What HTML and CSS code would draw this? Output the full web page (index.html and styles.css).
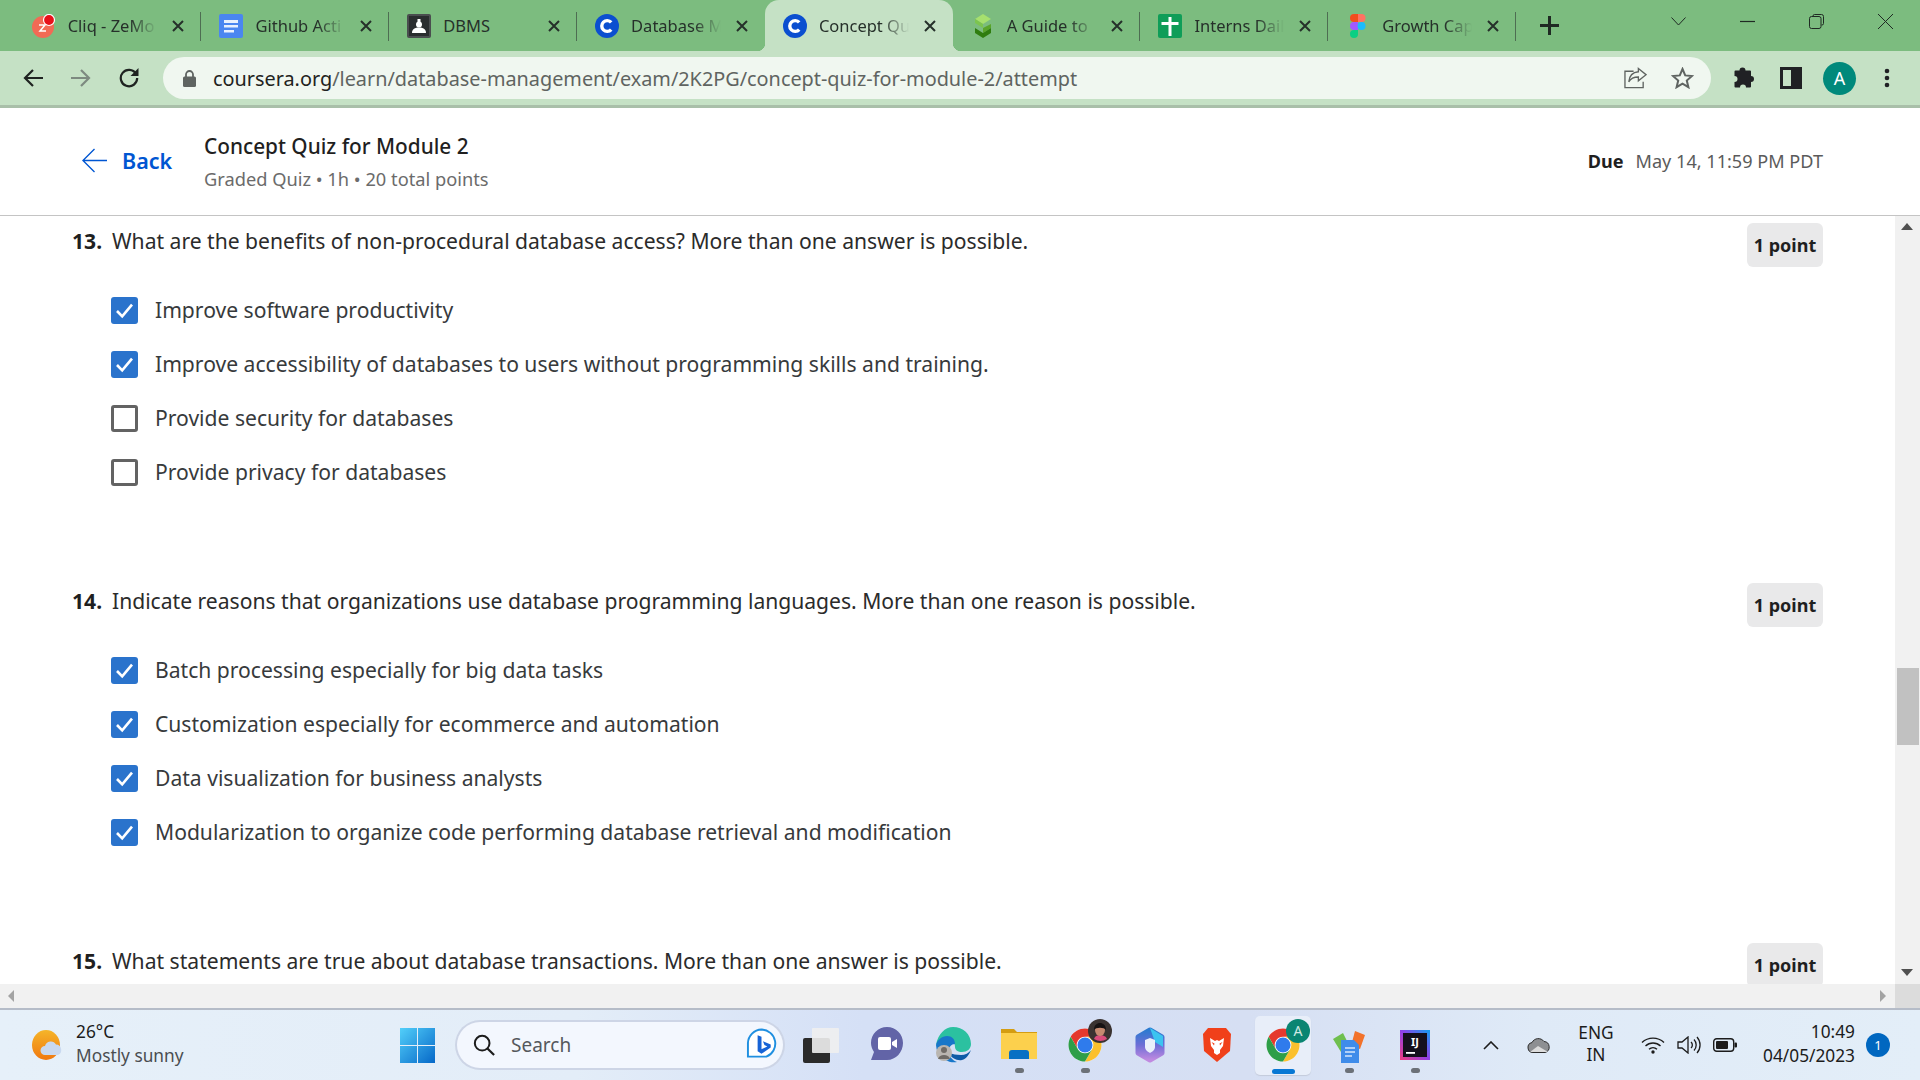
FILE: index.html
```html
<!DOCTYPE html>
<html lang="en">
<head>
  <meta charset="UTF-8" />
  <meta name="viewport" content="width=device-width, initial-scale=1.0" />
  <title>Concept Quiz for Module 2</title>
  <link rel="stylesheet" href="styles.css">
</head>
<body>

  <svg class="defs" width="0" height="0">
    <symbol id="coursera" viewBox="0 0 24 24">
      <circle cx="12" cy="12" r="12" fill="#0b4fd0"/>
      <path d="M16.2 8.4a5.4 5.4 0 1 0 0 7.2" fill="none" stroke="#fff" stroke-width="3.4"/>
    </symbol>
    <symbol id="chrome" viewBox="0 0 48 48">
      <circle cx="24" cy="24" r="22" fill="#fff"/>
      <path d="M24 13H43.05A22 22 0 0 0 4.95 13L14.47 29.5A11 11 0 0 1 24 13Z" fill="#e5392d"/>
      <path d="M43.05 13A22 22 0 0 1 24 46L33.53 29.5A11 11 0 0 0 24 13Z" fill="#fbc02d"/>
      <path d="M24 46A22 22 0 0 1 4.95 13L14.47 29.5A11 11 0 0 0 33.53 29.5Z" fill="#2e9e48"/>
      <circle cx="24" cy="24" r="10" fill="#2f7bec"/>
    </symbol>
    <symbol id="tick" viewBox="0 0 27 27">
      <rect x="0" y="0" width="27" height="27" rx="3" fill="#2a73cc"/>
      <path d="M6 14l5.2 5.4L21 7.6" fill="none" stroke="#fff" stroke-width="2.6"/>
    </symbol>
    <symbol id="close" viewBox="0 0 14 14">
      <path d="M2 2l10 10M12 2L2 12" fill="none" stroke="#25302a" stroke-width="2"/>
    </symbol>
  </svg>

  <div class="tabstrip">
    <div class="tab">
      <svg class="favicon" viewBox="0 0 24 24"><ellipse cx="11" cy="13" rx="11" ry="11" fill="#f26a55"/><circle cx="17" cy="6" r="5.5" fill="#e8101a" stroke="#fff" stroke-width="1.2"/><path d="M7 11h6l-5 6h6" fill="none" stroke="#fff" stroke-width="1.5"/></svg>
      <span class="tab-title">Cliq - ZeMo</span>
      <svg class="tab-close"><use href="#close"/></svg>
    </div>
    <div class="tab">
      <svg class="favicon" viewBox="0 0 24 24"><path d="M2 0h20a2 2 0 0 1 2 2v20a2 2 0 0 1-2 2H2a2 2 0 0 1-2-2V2a2 2 0 0 1 2-2z" fill="#4a86f0"/><path d="M5 6h14v3H5zM5 11h14v2.6H5zM5 16h10v2.6H5z" fill="#e8f0fe"/></svg>
      <span class="tab-title">Github Acti</span>
      <svg class="tab-close"><use href="#close"/></svg>
    </div>
    <div class="tab">
      <svg class="favicon" viewBox="0 0 24 24"><rect width="24" height="24" rx="2" fill="#4a4d4f"/><rect x="2" y="2" width="20" height="20" fill="#2a2d2f"/><rect x="10.500" y="5" width="3" height="3" fill="#fff"/><circle cx="12" cy="10.500" r="3" fill="#fff"/><path d="M5 19c0-4 3-5.500 7-5.500s7 1.500 7 5.500z" fill="#fff"/></svg>
      <span class="tab-title plain">DBMS</span>
      <svg class="tab-close"><use href="#close"/></svg>
    </div>
    <div class="tab no-sep">
      <svg class="favicon"><use href="#coursera"/></svg>
      <span class="tab-title">Database M</span>
      <svg class="tab-close"><use href="#close"/></svg>
    </div>
    <div class="tab active">
      <svg class="favicon"><use href="#coursera"/></svg>
      <span class="tab-title">Concept Qu</span>
      <svg class="tab-close"><use href="#close"/></svg>
    </div>
    <div class="tab">
      <svg class="favicon" viewBox="0 0 24 24"><path d="M12 0l8 5-8 5-8-5z" fill="#a6e06e"/><path d="M4 5l8 5v4l-8-5z" fill="#7cc44f"/><path d="M12 14l8-4v4l-8 5z" fill="#5aa52a"/><path d="M4 14l8 5 8-5v5l-8 5-8-5z" fill="#2f7d0f"/></svg>
      <span class="tab-title">A Guide to</span>
      <svg class="tab-close"><use href="#close"/></svg>
    </div>
    <div class="tab">
      <svg class="favicon" viewBox="0 0 24 24"><rect width="24" height="24" rx="2" fill="#0f9d58"/><path d="M10.500 3h3v5h7v3h-7v11h-3V11h-7V8h7z" fill="#fff"/></svg>
      <span class="tab-title">Interns Dail</span>
      <svg class="tab-close"><use href="#close"/></svg>
    </div>
    <div class="tab">
      <svg class="favicon" viewBox="0 0 24 24"><path d="M8 0h4v8H8a4 4 0 0 1 0-8z" fill="#f24e1e"/><path d="M12 0h3.500a4 4 0 0 1 0 8H12z" fill="#ff7262"/><path d="M8 8h4v8H8a4 4 0 0 1 0-8z" fill="#a259ff"/><circle cx="15.500" cy="12" r="4" fill="#1abcfe"/><path d="M8 16h4v4a4 4 0 1 1-4-4z" fill="#0acf83"/></svg>
      <span class="tab-title">Growth Cap</span>
      <svg class="tab-close"><use href="#close"/></svg>
    </div>
    <svg class="newtab" viewBox="0 0 19 19"><path d="M9.500 0v19M0 9.500h19" fill="none" stroke="#1f2a23" stroke-width="3"/></svg>
    <div class="window-controls">
      <svg class="win-btn chevron" viewBox="0 0 15 15"><path d="M.5 3.500l7 7.500 7-7.500" fill="none" stroke="#1f2a23" stroke-width="1"/></svg>
      <svg class="win-btn" viewBox="0 0 15 15"><path d="M0 7.500h15" fill="none" stroke="#1f2a23" stroke-width="1.200"/></svg>
      <svg class="win-btn" viewBox="0 0 15 15"><path d="M4 2.500v-.5a1.500 1.500 0 0 1 1.500-1.500h7a2 2 0 0 1 2 2v7a1.500 1.500 0 0 1-1.500 1.500h-.5" fill="none" stroke="#1f2a23"/><rect x=".5" y="2.500" width="11.500" height="12" rx="2" fill="none" stroke="#1f2a23"/></svg>
      <svg class="win-btn" viewBox="0 0 15 15"><path d="M0 0l15 15M15 0L0 15" fill="none" stroke="#1f2a23" stroke-width="1"/></svg>
    </div>
  </div>

  <div class="toolbar">
    <svg class="nav-icon first" viewBox="0 0 20 20"><path d="M20 10H2M10 2l-8 8 8 8" fill="none" stroke="#1f2321" stroke-width="2.200"/></svg>
    <svg class="nav-icon" viewBox="0 0 20 20"><path d="M0 10h18M10 2l8 8-8 8" fill="none" stroke="#7d8a80" stroke-width="2.200"/></svg>
    <svg class="nav-icon" viewBox="0 0 20 20"><path d="M17 5.800A8.200 8.200 0 1 0 18.200 10" fill="none" stroke="#1f2321" stroke-width="2.200"/><path d="M19.500 0v8h-8z" fill="#1f2321"/></svg>
    <div class="omnibox">
      <svg class="lock" viewBox="0 0 13 17"><path d="M3 7V4.500a3.500 3.500 0 0 1 7 0V7" fill="none" stroke="#5f6461" stroke-width="1.800"/><rect y="6.500" width="13" height="10.500" rx="1.500" fill="#5f6461"/></svg>
      <span class="url"><span class="url-host">coursera.org</span>/learn/database-management/exam/2K2PG/concept-quiz-for-module-2/attempt</span>
      <svg class="omni-icon share" viewBox="0 0 24 22"><path d="M10 4H1v17h19v-6" fill="none" stroke="#5f6461" stroke-width="1.400"/><path d="M15 1l8 6.500-8 6.500v-4c-5 0-8 1.500-10 5 .5-6 4-10 10-10.500z" fill="none" stroke="#5f6461" stroke-width="1.400"/></svg>
      <svg class="omni-icon star" viewBox="0 0 22 22"><path d="M11 2l2.700 6.400 6.800.6-5.200 4.500 1.600 6.700L11 16.600l-5.900 3.600 1.600-6.700L1.500 9l6.800-.6z" fill="none" stroke="#5f6461" stroke-width="2"/></svg>
    </div>
    <svg class="tool-icon puzzle" viewBox="0 0 22 22"><path d="M7.500 3.500a3 3 0 0 1 6 0H18a1 1 0 0 1 1 1V9a3 3 0 0 1 0 6v4.500a1 1 0 0 1-1 1h-4a3 3 0 0 0-6 0H3.500a1 1 0 0 1-1-1V15a3 3 0 0 0 0-6V4.500a1 1 0 0 1 1-1z" fill="#202124"/></svg>
    <svg class="tool-icon panel" viewBox="0 0 22 22"><path d="M0 0h22v22H0zM3 3v16h8V3z" fill="#202124" fill-rule="evenodd"/></svg>
    <span class="avatar">A</span>
    <svg class="tool-icon dots" viewBox="0 0 6 20"><circle cx="3" cy="3" r="2.300" fill="#202124"/><circle cx="3" cy="10" r="2.300" fill="#202124"/><circle cx="3" cy="17" r="2.300" fill="#202124"/></svg>
  </div>

  <header class="quiz-head">
    <a class="back" href="#">
      <svg class="back-arrow" viewBox="0 0 26 26"><path d="M26 13H1M13 1L1 13l12 12" fill="none" stroke="#0056d2" stroke-width="1.400"/></svg>
      <span>Back</span>
    </a>
    <div class="quiz-title">
      <h1>Concept Quiz for Module 2</h1>
      <p>Graded Quiz • 1h • 20 total points</p>
    </div>
    <div class="due"><b>Due</b><span>May 14, 11:59 PM PDT</span></div>
  </header>

  <div class="viewport">
    <main class="quiz">
      <section class="question">
        <div class="q-head">
          <p class="q-text"><b>13.</b><span>What are the benefits of non-procedural database access? More than one answer is possible.</span></p>
          <span class="points">1 point</span>
        </div>
        <ul class="options">
          <li><svg class="check"><use href="#tick"/></svg>Improve software productivity</li>
          <li><svg class="check"><use href="#tick"/></svg>Improve accessibility of databases to users without programming skills and training.</li>
          <li><span class="check empty"></span>Provide security for databases</li>
          <li><span class="check empty"></span>Provide privacy for databases</li>
        </ul>
      </section>

      <section class="question">
        <div class="q-head">
          <p class="q-text"><b>14.</b><span>Indicate reasons that organizations use database programming languages. More than one reason is possible.</span></p>
          <span class="points">1 point</span>
        </div>
        <ul class="options">
          <li><svg class="check"><use href="#tick"/></svg>Batch processing especially for big data tasks</li>
          <li><svg class="check"><use href="#tick"/></svg>Customization especially for ecommerce and automation</li>
          <li><svg class="check"><use href="#tick"/></svg>Data visualization for business analysts</li>
          <li><svg class="check"><use href="#tick"/></svg>Modularization to organize code performing database retrieval and modification</li>
        </ul>
      </section>

      <section class="question">
        <div class="q-head">
          <p class="q-text"><b>15.</b><span>What statements are true about database transactions. More than one answer is possible.</span></p>
          <span class="points">1 point</span>
        </div>
      </section>
    </main>
    <div class="vscroll">
      <span class="arrow up"></span>
      <span class="vthumb"></span>
      <span class="arrow down"></span>
    </div>
  </div>

  <div class="hscroll">
    <span class="arrow left"></span>
    <span class="arrow right"></span>
    <span class="corner"></span>
  </div>

  <footer class="taskbar">
    <div class="weather">
      <svg class="weather-icon" viewBox="0 0 32 32"><defs><linearGradient id="sun" x1="0" y1="0" x2="0" y2="1"><stop offset="0" stop-color="#f5b52a"/><stop offset="1" stop-color="#f0780f"/></linearGradient></defs><ellipse cx="14" cy="16" rx="14" ry="15" fill="url(#sun)"/><path d="M13 26a4.500 4.500 0 0 1 0-9 6 6 0 0 1 11-1.500 5.500 5.500 0 0 1 2 10.500z" fill="#c9d9f0"/></svg>
      <div class="weather-text">
        <span class="temp">26°C</span>
        <span class="sky">Mostly sunny</span>
      </div>
    </div>

    <svg class="start" viewBox="0 0 35 35"><defs><linearGradient id="win" x1="0" y1="0" x2="1" y2="1"><stop offset="0" stop-color="#52cffa"/><stop offset="1" stop-color="#0668c8"/></linearGradient></defs><path d="M0 0h17v17H0zM18 0h17v17H18zM0 18h17v17H0zM18 18h17v17H18z" fill="url(#win)"/></svg>

    <div class="search">
      <svg class="search-icon" viewBox="0 0 24 24"><circle cx="10" cy="10" r="8" fill="none" stroke="#1c1c1c" stroke-width="2.200"/><path d="M15.500 15.500L23 23" stroke="#1c1c1c" stroke-width="2.400"/></svg>
      <span class="search-text">Search</span>
      <svg class="bing" viewBox="0 0 32 36"><path d="M16 2a14.500 14.500 0 0 1 5 28H2V16A14.500 14.500 0 0 1 16 2z" fill="#fff" stroke="#1f8fe0" stroke-width="2"/><path d="M12 8l4 1.500v13l6-3-3-1.500-1.500-4 8 3.500v3L16 27l-4-2.500z" fill="#1663d6"/></svg>
    </div>

    <div class="apps">
      <div class="app"><svg class="app-icon" viewBox="0 0 36 36"><rect y="11" width="27" height="25" rx="2" fill="#2b2b2b"/><rect x="9" y="1" width="27" height="25" rx="1" fill="#efefef" fill-opacity=".9"/></svg></div>
      <div class="app"><svg class="app-icon" viewBox="0 0 36 36"><path d="M18 0c9 0 16 7 16 16s-7 17-16 17H2l3-8c-2-3-3-6-3-9C2 7 9 0 18 0z" fill="#6264a7"/><rect x="9" y="10" width="13" height="13" rx="2" fill="#fff"/><path d="M23 15l5-3v9l-5-3z" fill="#fff"/></svg></div>
      <div class="app"><svg class="app-icon" viewBox="0 0 36 36"><path d="M18 0c10 0 18 7 18 17 0 5-4 8-9 8-4 0-7-2-7-5 0-5-3-8-8-8-4 0-8 2-11 6C3 7 10 0 18 0z" fill="#2bc1a0"/><path d="M1 18c1-5 6-9 11-9 5 0 8 3 8 8-4 0-6 3-6 7 0 5 3 9 8 11a18 18 0 0 1-21-17z" fill="#1877c9"/><path d="M14 26c2 5 8 8 13 7 4-1 7-5 9-10-2 3-6 5-10 5-5 0-8-1-12-2z" fill="#0d5aa6"/><circle cx="9" cy="26" r="8" fill="#b9b5b0"/><circle cx="9" cy="23" r="3" fill="#6f6b66"/><path d="M3 32c1-3 3-4 6-4s5 1 6 4z" fill="#6f6b66"/></svg></div>
      <div class="app pip"><svg class="app-icon" viewBox="0 0 36 36"><path d="M0 2h13l3 3h20v6H0z" fill="#d49d12"/><path d="M0 6h36v26H0z" fill="#fcd04d"/><path d="M8 32v-6a3 3 0 0 1 3-3h14a3 3 0 0 1 3 3v6z" fill="#0870c4"/></svg></div>
      <div class="app pip">
        <svg class="app-icon"><use href="#chrome"/></svg>
        <svg class="badge" viewBox="0 0 24 24"><circle cx="12" cy="12" r="12" fill="#3a3331"/><path d="M6 20c1-3 3-4 6-4s6 1 7 4a12 12 0 0 1-13 0z" fill="#d94d7c"/><ellipse cx="12" cy="11" rx="5" ry="6" fill="#c58a70"/><path d="M6 11c0-5 3-7 6-7s6 2 6 7c-2-3-10-3-12 0z" fill="#171313"/></svg>
      </div>
      <div class="app"><svg class="app-icon" viewBox="0 0 36 36"><defs><linearGradient id="ms" x1="0" y1="0" x2="0" y2="1"><stop offset="0" stop-color="#2a7ad0"/><stop offset=".5" stop-color="#6d6ed6"/><stop offset="1" stop-color="#c08ae0"/></linearGradient></defs><path d="M17 3l12 7v16l-12 7-12-7V10z" fill="url(#ms)" stroke="url(#ms)" stroke-width="5" stroke-linejoin="round"/><path d="M17 1l13 8v11l-8-5z" fill="#3cc4f0"/><path d="M12 13l5-2 5 2v7c0 3-3 5-5 6-2-1-5-3-5-6z" fill="#eaf0fb"/></svg></div>
      <div class="app"><svg class="app-icon" viewBox="0 0 36 36"><path d="M9 1h18l5 6-1 17-13 11L5 24 4 7z" fill="#f0401a"/><path d="M11 11l5 3 2-1 2 1 5-3-1 8-3 4v3l-3 2-3-2v-3l-3-4z" fill="#fff"/><path d="M12.500 15l3 1.500-.5 2zM23.500 15l-3 1.500.5 2z" fill="#f0401a"/></svg></div>
      <div class="app current">
        <svg class="app-icon"><use href="#chrome"/></svg>
        <svg class="badge" viewBox="0 0 24 24"><circle cx="12" cy="12" r="12" fill="#0a8572"/><text x="12" y="17" text-anchor="middle" font-size="14" font-family="Noto Sans" fill="#cfe9e4">A</text></svg>
      </div>
      <div class="app pip"><svg class="app-icon" viewBox="0 0 36 36"><path d="M2 12l10-6 7 14-9 5z" fill="#6fbf4e"/><path d="M24 4l10 4-5 14-9-3z" fill="#f2722b"/><path d="M10 13h13l5 5v18H10z" fill="#3f8cea"/><path d="M14 21h10M14 25h10M14 29h7" stroke="#d6e6fb" stroke-width="1.500"/></svg></div>
      <div class="app pip"><svg class="app-icon ij" viewBox="0 0 30 30"><defs><linearGradient id="jb" x1="0" y1="1" x2="1" y2="0"><stop offset="0" stop-color="#f13c7c"/><stop offset=".5" stop-color="#9040e8"/><stop offset="1" stop-color="#10a0f0"/></linearGradient></defs><rect width="30" height="30" fill="url(#jb)"/><rect x="3" y="3" width="24" height="24" fill="#14101c"/><rect x="6" y="22" width="9" height="1.800" fill="#fff"/><text x="15" y="16" text-anchor="middle" font-size="11" font-weight="700" font-family="Noto Sans" fill="#fff">IJ</text></svg></div>
    </div>

    <div class="tray">
      <svg class="tray-caret" viewBox="0 0 16 9"><path d="M1 8l7-7 7 7" fill="none" stroke="#1c1c1c" stroke-width="1.600"/></svg>
      <svg class="tray-cloud" viewBox="0 0 24 16"><path d="M6 15.500a5 5 0 0 1-1-9.900A7 7 0 0 1 17 4.500a5.600 5.600 0 0 1 1 11z" fill="#8d8f92" stroke="#2c2c2c" stroke-width="1"/><path d="M3 15l8-6 10 6z" fill="#dcdcdc"/></svg>
      <div class="lang"><span>ENG</span><span>IN</span></div>
      <svg class="tray-icon" viewBox="0 0 24 18"><path d="M1 6.500a16 16 0 0 1 22 0M4.500 10a11 11 0 0 1 15 0M8 13.300a6 6 0 0 1 8 0" fill="none" stroke="#1c1c1c" stroke-width="1.400"/><circle cx="12" cy="16" r="1.700" fill="#1c1c1c"/></svg>
      <svg class="tray-icon" viewBox="0 0 24 18"><path d="M1 6h4l6-5v16l-6-5H1z" fill="none" stroke="#1c1c1c" stroke-width="1.300"/><path d="M14 6a4 4 0 0 1 0 6M17 3.500a8 8 0 0 1 0 11M20 1a12 12 0 0 1 0 16" fill="none" stroke="#1c1c1c" stroke-width="1.300"/></svg>
      <svg class="tray-icon" viewBox="0 0 24 14"><rect x=".7" y=".7" width="20" height="12.600" rx="3" fill="none" stroke="#1c1c1c" stroke-width="1.400"/><rect x="3" y="3" width="12" height="8" rx="1" fill="#1c1c1c"/><rect x="21.500" y="4.500" width="2.500" height="5" rx="1" fill="#1c1c1c"/></svg>
      <div class="clock"><span>10:49</span><span>04/05/2023</span></div>
      <span class="notify">1</span>
    </div>
  </footer>

</body>
</html>
```

FILE: styles.css
```css
* {
  box-sizing: border-box;
}

html, body {
  margin: 0;
  height: 1080px;
  overflow: hidden;
}

body {
  display: flex;
  flex-direction: column;
  font-family: "Noto Sans", Arial, sans-serif;
  background: #fff;
}

.defs {
  position: absolute;
}

/* browser tabs */
.tabstrip {
  display: flex;
  align-items: flex-end;
  height: 51px;
  padding-left: 13.700px;
  background: #7cbc7f;
}

.tab {
  position: relative;
  display: flex;
  align-items: center;
  flex: none;
  width: 187.800px;
  height: 51px;
  padding: 0 16px 0 18px;
  gap: 12px;
  color: #26302a;
}

.tab::after {
  content: "";
  position: absolute;
  right: 0;
  top: 12px;
  height: 29px;
  border-right: 1px solid #4e6d52;
}

.no-sep::after {
  display: none;
}

.tab.active {
  background: #c5e1c5;
  border-radius: 14px 14px 0 0;
}

/* the little outward curves at the foot of the active tab */
.tab.active::before, .tab.active::after {
  content: "";
  position: absolute;
  top: auto;
  bottom: 0;
  width: 8px;
  height: 8px;
  border: 0;
}

.tab.active::before {
  left: -8px;
  background: radial-gradient(circle at 0 0, transparent 8px, #c5e1c5 8.500px);
}

.tab.active::after {
  right: -8px;
  background: radial-gradient(circle at 100% 0, transparent 8px, #c5e1c5 8.500px);
}

.favicon {
  flex: none;
  width: 24px;
  height: 24px;
}

.tab-title {
  flex: 1;
  min-width: 0;
  white-space: nowrap;
  font-size: 16.500px;
  -webkit-mask-image: linear-gradient(to right, #000 68%, transparent 98%);
  mask-image: linear-gradient(to right, #000 68%, transparent 98%);
}

.tab-title.plain {
  -webkit-mask-image: none;
  mask-image: none;
}

.tab-close {
  flex: none;
  width: 14px;
  height: 14px;
}

.newtab {
  flex: none;
  width: 19px;
  height: 19px;
  margin: 0 0 16px 24px;
}

.window-controls {
  display: flex;
  align-items: flex-start;
  gap: 54px;
  margin-left: auto;
  align-self: flex-start;
  padding: 14px 27px 0 0;
}

.win-btn {
  width: 15px;
  height: 15px;
}

/* address bar row */
.toolbar {
  display: flex;
  align-items: center;
  height: 57px;
  border-bottom: 3px solid #a9bfa9;
  background: #c5e1c5;
}

.nav-icon {
  flex: none;
  width: 20px;
  height: 20px;
  margin-right: 28px;
}

.nav-icon.first {
  margin-left: 23px;
}

.omnibox {
  display: flex;
  align-items: center;
  flex: none;
  width: 1548px;
  height: 42px;
  margin-left: -4px;
  padding: 0 17px 0 20px;
  border-radius: 21px;
  background: #f0f7f0;
}

.lock {
  flex: none;
  width: 13px;
  height: 17px;
  margin-right: 17px;
}

.url {
  flex: 1;
  font-size: 19.850px;
  white-space: nowrap;
  color: #5f6461;
}

.url-host {
  color: #1f2321;
}

.omni-icon {
  flex: none;
  width: 23px;
  height: 22px;
}

.omni-icon.share {
  margin-right: 24px;
  margin-left: 1px;
}

.tool-icon {
  flex: none;
  width: 22px;
  height: 22px;
}

.puzzle {
  margin-left: 21px;
}

.panel {
  margin-left: 26px;
}

.avatar {
  display: flex;
  align-items: center;
  justify-content: center;
  flex: none;
  width: 33px;
  height: 33px;
  margin: 0 28px 0 21px;
  border-radius: 50%;
  background: #00897b;
  color: #fff;
  font-size: 18px;
}

.dots {
  width: 6px;
}

/* quiz header */
.quiz-head {
  display: flex;
  align-items: center;
  flex: none;
  height: 108px;
  padding: 0 97px 2px 82px;
  border-bottom: 1px solid #c4c4c4;
}

.back {
  display: flex;
  align-items: center;
  gap: 15px;
  width: 122px;
  color: #0056d2;
  font-size: 21.500px;
  font-weight: 600;
  text-decoration: none;
}

.back-arrow {
  width: 25px;
  height: 25px;
}

.quiz-title {
  margin-top: 2px;
}

.quiz-title h1 {
  margin: 0 0 4px;
  font-size: 20.800px;
  line-height: 30px;
  font-weight: 500;
  color: #1f1f1f;
}

.quiz-title p {
  margin: 0;
  font-size: 18.250px;
  line-height: 28px;
  color: #6b6b6b;
}

.due {
  display: flex;
  gap: 12px;
  margin-left: auto;
  font-size: 18.100px;
  color: #5b5b5b;
}

.due b {
  font-weight: 700;
  color: #1f1f1f;
}

/* questions */
.viewport {
  display: flex;
  flex: none;
  height: 768px;
  overflow: hidden;
}

.quiz {
  flex: 1;
  min-width: 0;
  padding: 0 72px;
}

.question {
  height: 360px;
  padding-top: 7px;
}

.q-head {
  display: flex;
  justify-content: space-between;
  align-items: flex-start;
  height: 60px;
}

.q-text {
  display: flex;
  margin: 0;
  font-size: 21.100px;
  line-height: 35px;
  color: #2b2b2b;
}

.q-text b {
  flex: none;
  width: 40px;
  color: #1f1f1f;
}

.points {
  display: flex;
  align-items: center;
  justify-content: center;
  width: 76px;
  height: 44px;
  border-radius: 6px;
  background: #e9e9ea;
  font-size: 18px;
  font-weight: 700;
  color: #1f1f1f;
}

.options {
  margin: 0;
  padding: 0 0 0 39px;
  list-style: none;
}

.options li {
  display: flex;
  align-items: center;
  gap: 17px;
  height: 54px;
  font-size: 21.100px;
  line-height: 52px;
  color: #373a3c;
}

.check {
  flex: none;
  width: 27px;
  height: 27px;
}

.check.empty {
  border: 3px solid #636363;
  border-radius: 3px;
}

/* scrollbars */
.vscroll {
  position: relative;
  flex: none;
  width: 25px;
  background: #f1f1f1;
}

.vthumb {
  position: absolute;
  top: 452px;
  left: 2px;
  right: 1px;
  height: 77px;
  background: #c1c1c1;
}

.arrow {
  position: absolute;
  width: 0;
  height: 0;
  border: 6px solid transparent;
}

.arrow.up {
  top: 7px;
  left: 6px;
  border-top: 0;
  border-bottom: 7px solid #505050;
}

.arrow.down {
  bottom: 8px;
  left: 6px;
  border-bottom: 0;
  border-top: 7px solid #505050;
}

.hscroll {
  position: relative;
  flex: none;
  height: 24px;
  background: #f1f1f1;
}

.arrow.left {
  top: 6px;
  left: 8px;
  border-left: 0;
  border-right: 6px solid #a3a3a3;
}

.arrow.right {
  top: 6px;
  left: 1880px;
  border-right: 0;
  border-left: 6px solid #a3a3a3;
}

.corner {
  position: absolute;
  top: 0;
  right: 0;
  bottom: 0;
  width: 25px;
  background: #dcdcdc;
}

/* windows taskbar */
.taskbar {
  display: flex;
  align-items: center;
  flex: none;
  height: 72px;
  padding-left: 32px;
  border-top: 2px solid #b5bcc8;
  background: linear-gradient(to right, #e6f0f9 0%, #e3edf8 30%, #d5e0f6 45%, #d6dff3 65%, #dfeaf7 80%, #e3eef8 100%);
}

.weather {
  display: flex;
  align-items: center;
  gap: 12px;
  flex: none;
  width: 368px;
}

.weather-icon {
  flex: none;
  width: 32px;
  height: 32px;
}

.weather-text {
  display: flex;
  flex-direction: column;
  margin-top: -3px;
  font-size: 17.300px;
  line-height: 24px;
}

.temp {
  color: #1c1c1c;
}

.sky {
  color: #4a4d50;
}

.start {
  flex: none;
  width: 35px;
  height: 35px;
}

.search {
  display: flex;
  align-items: center;
  flex: none;
  width: 326px;
  height: 46px;
  margin-left: 22px;
  padding: 0 6px 0 16px;
  border-radius: 23px;
  background: #f3f7fe;
  box-shadow: 0 0 0 2px #cdd5e6;
}

.search-icon {
  flex: none;
  width: 22px;
  height: 22px;
}

.search-text {
  flex: 1;
  margin-left: 16px;
  font-size: 19px;
  color: #55585c;
}

.bing {
  flex: none;
  width: 31px;
  height: 36px;
}

.apps {
  display: flex;
  flex: none;
  margin-left: 5px;
}

.app {
  position: relative;
  display: flex;
  align-items: center;
  justify-content: center;
  flex: none;
  width: 66px;
  height: 70px;
}

.app-icon {
  flex: none;
  width: 36px;
  height: 36px;
}

.app-icon.ij {
  width: 30px;
  height: 30px;
}

.badge {
  position: absolute;
  top: 9px;
  left: 36px;
  width: 24px;
  height: 24px;
}

.app.pip::after {
  content: "";
  position: absolute;
  left: 29px;
  bottom: 7px;
  width: 9px;
  height: 5px;
  border-radius: 3px;
  background: #6c7178;
}

.app.current::before {
  content: "";
  position: absolute;
  top: 6px;
  left: 5px;
  right: 5px;
  bottom: 5px;
  border-radius: 5px;
  background: #e8eef9;
  box-shadow: 0 1px 1px #c4cbdb;
}

.app.current .app-icon, .app.current .badge {
  z-index: 1;
}

.app.current::after {
  content: "";
  position: absolute;
  left: 22px;
  bottom: 6px;
  width: 23px;
  height: 5px;
  border-radius: 3px;
  background: #0878d4;
}

.tray {
  display: flex;
  align-items: center;
  flex: 1;
  color: #1c1c1c;
}

.tray-caret {
  flex: none;
  width: 16px;
  height: 9px;
  margin-left: 35px;
}

.tray-cloud {
  flex: none;
  width: 24px;
  height: 16px;
  margin-left: 28px;
}

.lang {
  display: flex;
  flex-direction: column;
  align-items: center;
  width: 44px;
  margin: -2px 0 0 23px;
  font-size: 17.300px;
  line-height: 22px;
}

.tray-icon {
  flex: none;
  width: 24px;
  height: 18px;
  margin-left: 12px;
}

.lang + .tray-icon {
  margin-left: 23px;
}

.clock {
  display: flex;
  flex-direction: column;
  align-items: flex-end;
  margin: -3px 0 0 auto;
  font-size: 17.300px;
  line-height: 24px;
}

.notify {
  display: flex;
  align-items: center;
  justify-content: center;
  flex: none;
  width: 24px;
  height: 24px;
  margin: 0 30px 0 11px;
  border-radius: 50%;
  background: #0067c0;
  color: #fff;
  font-size: 13px;
}
```
